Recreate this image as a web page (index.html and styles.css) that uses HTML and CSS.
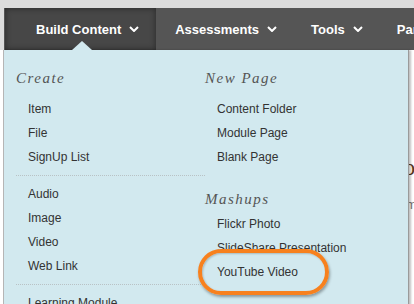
FILE: index.html
```html
<!DOCTYPE html>
<html>

<head>
  <title>Build Content</title>
  <meta name="viewport" content="width=device-width, initial-scale=1.0">
  <link rel="stylesheet" href="styles.css">
</head>

<body>
  <div class="topstrip"></div>
  <nav class="menubar">
    <div class="tab active">Build Content
      <svg class="chev" width="10" height="6" viewBox="0 0 10 6"><polyline points="1,1 5,5 9,1" /></svg>
    </div>
    <div class="tab">Assessments
      <svg class="chev" width="10" height="6" viewBox="0 0 10 6"><polyline points="1,1 5,5 9,1" /></svg>
    </div>
    <div class="tab">Tools
      <svg class="chev" width="10" height="6" viewBox="0 0 10 6"><polyline points="1,1 5,5 9,1" /></svg>
    </div>
    <div class="tab">Partner Content</div>
  </nav>

  <div class="content">
    <h1 class="course-title">Instructor's Area</h1>
    <p class="course-note">Welcome here</p>
  </div>

  <!-- dropdown opened under Build Content -->
  <div class="dropdown">
    <span class="caret"></span>
    <div class="col col-left">
      <h3 class="group-title">Create</h3>
      <ul class="items">
        <li>Item</li>
        <li>File</li>
        <li>SignUp List</li>
      </ul>
      <ul class="items divided">
        <li>Audio</li>
        <li>Image</li>
        <li>Video</li>
        <li>Web Link</li>
      </ul>
      <ul class="items divided">
        <li>Learning Module</li>
        <li>Lesson Plan</li>
      </ul>
    </div>
    <div class="col col-right">
      <h3 class="group-title">New Page</h3>
      <ul class="items">
        <li>Content Folder</li>
        <li>Module Page</li>
        <li>Blank Page</li>
      </ul>
      <h3 class="group-title mashups">Mashups</h3>
      <ul class="items tight">
        <li>Flickr Photo</li>
        <li>SlideShare Presentation</li>
        <li>YouTube Video</li>
      </ul>
    </div>
    <div class="highlight"></div>
  </div>
</body>

</html>
```

FILE: styles.css
```css
body {
  font-family: "Liberation Sans", Arial, sans-serif;
  margin: 0;
  padding: 0;
  background: #fff;
  width: 414px;
  height: 304px;
  overflow: hidden;
  position: relative;
}

.topstrip {
  height: 8px;
  background: #dcdcdc;
}

.menubar {
  display: flex;
  height: 42px;
  background: #555;
  border-left: 4px solid #dcdcdc;
  white-space: nowrap;
}

.tab {
  display: flex;
  align-items: center;
  gap: 8px;
  padding: 0 17px;
  color: #fff;
  font-size: 13px;
  font-weight: bold;
}

.tab.active {
  margin-left: 1px;
  padding: 0 17px 0 31px;
  margin-right: 2px;
  background: #474747;
  box-shadow: inset 0 0 6px rgba(0, 0, 0, 0.45);
}

.chev {
  fill: none;
  stroke: #fff;
  stroke-width: 2;
}

.content {
  padding: 104px 0 0 330px;
  white-space: nowrap;
}

.course-title {
  margin: 0;
  font-family: "Liberation Serif", serif;
  font-size: 24px;
  font-weight: normal;
  color: #5a3a22;
}

.course-note {
  margin: 16px 0 0 40px;
  font-size: 13px;
  color: #777;
}

.dropdown {
  position: absolute;
  left: 3px;
  top: 50px;
  width: 404px;
  height: 270px;
  display: flex;
  padding-top: 19px;
  background: #d2e9ef;
  border-left: 1px solid #b5b5b5;
  border-right: 1px solid #9a9a9a;
  box-shadow: 2px 0 2px rgba(0, 0, 0, 0.25);
}

.caret {
  position: absolute;
  left: 68px;
  top: -9px;
  width: 0;
  height: 0;
  border-left: 10px solid transparent;
  border-right: 10px solid transparent;
  border-bottom: 9px solid #d2e9ef;
}

.col-left {
  margin-left: 12px;
  width: 189px;
}

.group-title {
  margin: 0;
  height: 18px;
  line-height: 18px;
  font-family: "Liberation Serif", Georgia, serif;
  font-style: italic;
  font-weight: normal;
  font-size: 15px;
  letter-spacing: 1.5px;
  color: #555;
}

.group-title.mashups {
  margin-top: 21px;
}

.items {
  list-style: none;
  margin: 10px 0 6px;
  padding: 0 0 0 12px;
}

.items.tight {
  margin-top: 4px;
}

.items.divided {
  margin-top: 0;
  padding-top: 6px;
  border-top: 1px dotted #b9c2c5;
}

.items li {
  height: 24px;
  line-height: 24px;
  font-size: 12px;
  color: #333;
  white-space: nowrap;
}

.highlight {
  position: absolute;
  left: 194px;
  top: 199px;
  width: 123px;
  height: 38px;
  border: 4px solid #f7811e;
  border-radius: 23px;
  box-shadow: 1px 2px 3px rgba(0, 0, 0, 0.35), inset 1px 1px 2px rgba(0, 0, 0, 0.2);
}
```
